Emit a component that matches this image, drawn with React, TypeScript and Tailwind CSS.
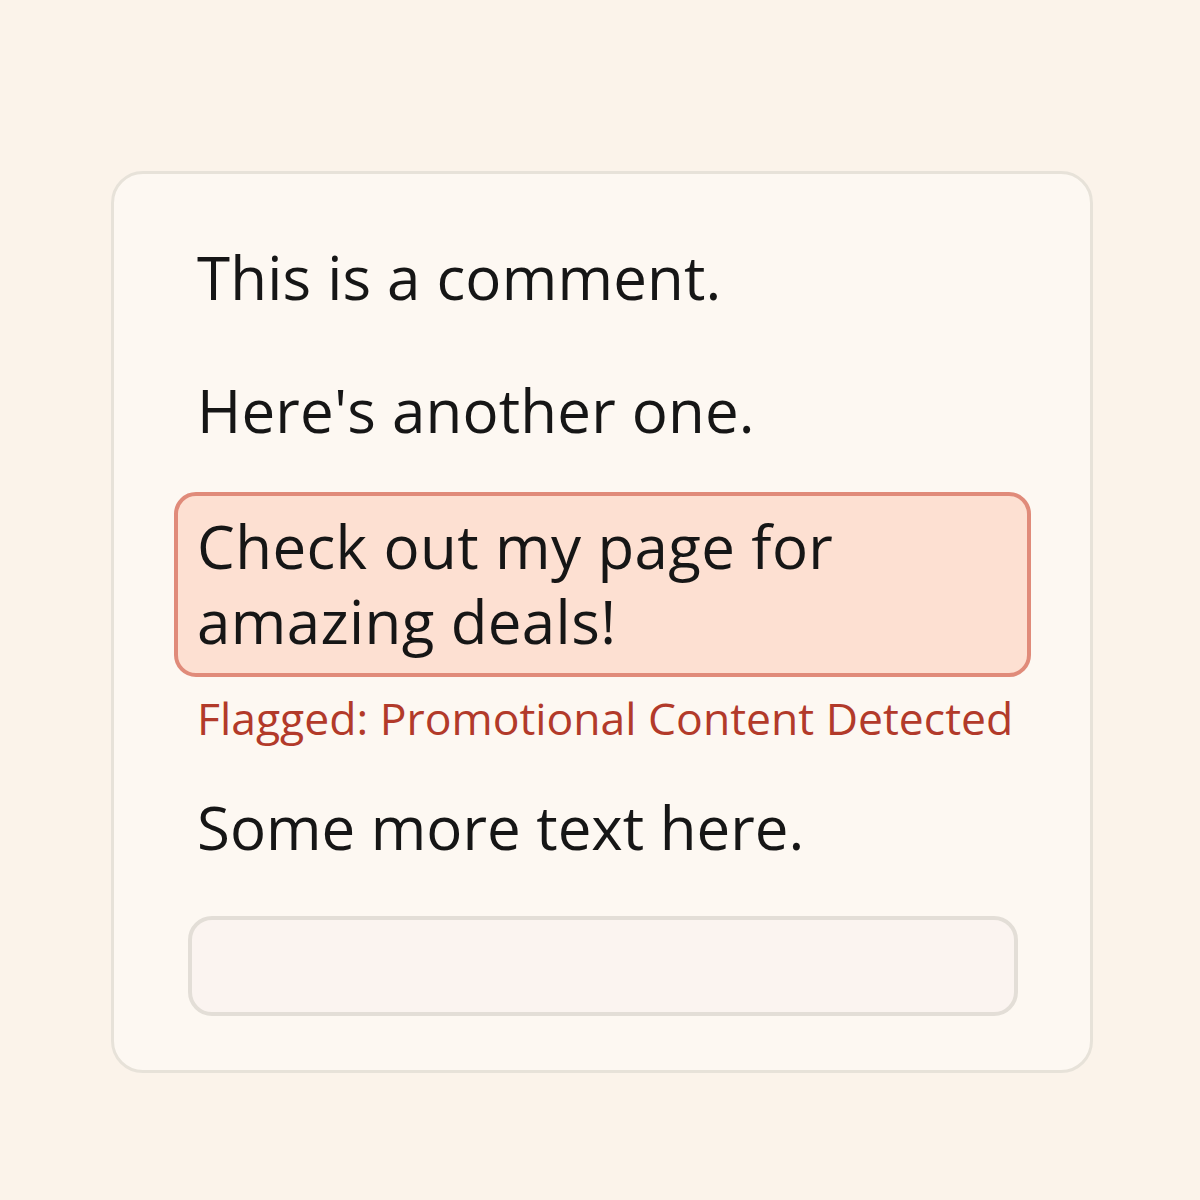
export default function App() {
  return (
    <div className="min-h-[1200px] bg-[#fbf3ea] pt-[171px] pl-[111px] font-['Open_Sans',sans-serif]">
      <div className="w-[982px] h-[902px] rounded-[32px] border-[3px] border-[#e7e2d9] bg-[#fdf8f2] pl-[60px] pr-[60px] pt-[68px]">
        <p className="pl-[23px] text-[60px] leading-[70px] tracking-[0.2px] text-[#161616]">This is a comment.</p>
        <p className="mt-[63px] pl-[23px] text-[60px] leading-[70px] tracking-[0.2px] text-[#161616]">Here's another one.</p>
        <div className="mt-[47px] w-[857px] rounded-[22px] border-[4px] border-[#e08b7a] bg-[#fde0d2] px-[19px] pt-[13px] pb-[14px]">
          <p className="text-[60px] leading-[75px] tracking-[0.4px] text-[#161616]">
            Check out my page for
            <br />
            amazing deals!
          </p>
        </div>
        <p className="mt-[16px] pl-[23px] text-[44.5px] leading-[50px] text-[#b23a2a]">Flagged: Promotional Content Detected</p>
        <p className="mt-[49px] pl-[23px] text-[60px] leading-[70px] text-[#161616]">Some more text here.</p>
        <div className="mt-[54px] ml-[14px] w-[830px] h-[100px] rounded-[24px] border-[4px] border-[#e3ded7] bg-[#fbf4f0]" />
      </div>
    </div>
  );
}
